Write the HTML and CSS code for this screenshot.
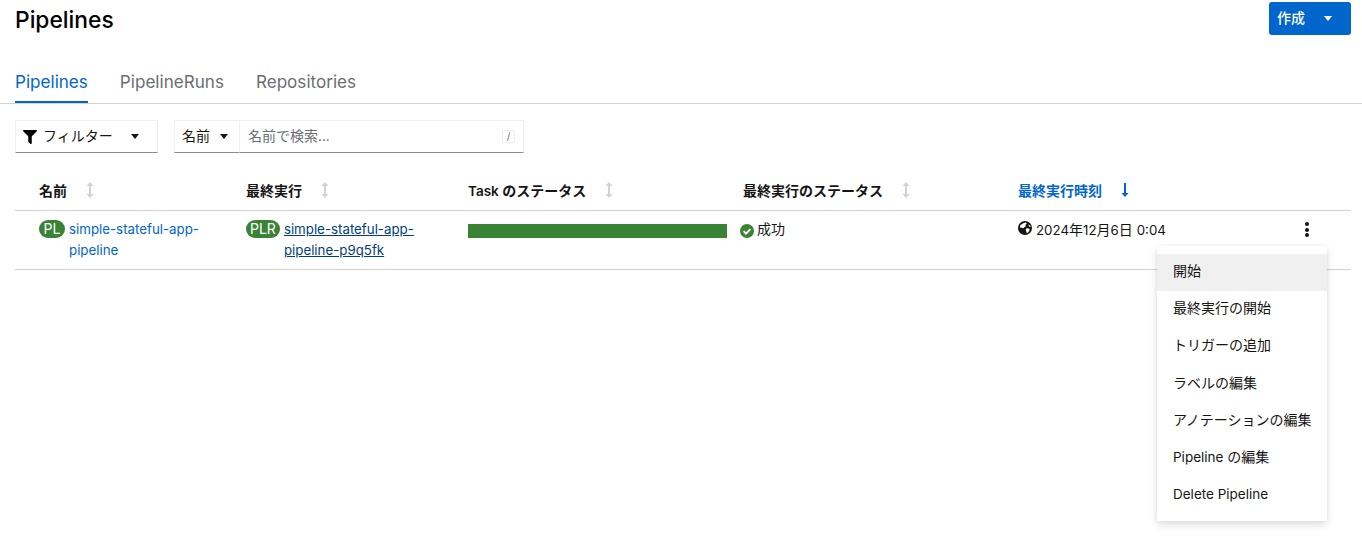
FILE: index.html
```html
<!DOCTYPE html>
<html lang="ja">
<head>
  <meta charset="UTF-8">
  <title>Pipelines</title>
  <link rel="stylesheet" href="styles.css">
</head>
<body>
  <div class="page-header">
    <h1>Pipelines</h1>
    <button class="create-btn"><span class="btn-text">作成</span> <span class="caret caret-white"></span></button>
  </div>

  <div class="tabs">
    <a class="tab active">Pipelines</a>
    <a class="tab">PipelineRuns</a>
    <a class="tab">Repositories</a>
  </div>

  <div class="toolbar">
    <button class="filter-btn">
      <svg class="filter-icon" viewBox="0 0 512 512"><path d="M487 0H25C3 0-9 27 7 43l185 185v204c0 8 4 15 10 20l80 56c16 11 38 0 38-20V228L505 43c16-16 4-43-18-43z"/></svg>
      <span class="btn-text">フィルター</span>
      <span class="caret"></span>
    </button>
    <div class="search-group">
      <button class="name-btn"><span class="btn-text">名前</span> <span class="caret"></span></button>
      <div class="search-box">
        <span class="placeholder btn-text">名前で検索<span class="lat">...</span></span>
        <span class="slash">/</span>
      </div>
    </div>
  </div>

  <div class="table">
    <div class="row head">
      <div class="cell">名前 <svg class="sort-icon" viewBox="0 0 8 16"><path d="M4 0L7.500 4H5v8h2.500L4 16 .5 12H3V4H.5z"/></svg></div>
      <div class="cell">最終実行 <svg class="sort-icon" viewBox="0 0 8 16"><path d="M4 0L7.500 4H5v8h2.500L4 16 .5 12H3V4H.5z"/></svg></div>
      <div class="cell"><span><span class="lat">Task</span> のステータス</span> <svg class="sort-icon" viewBox="0 0 8 16"><path d="M4 0L7.500 4H5v8h2.500L4 16 .5 12H3V4H.5z"/></svg></div>
      <div class="cell">最終実行のステータス <svg class="sort-icon" viewBox="0 0 8 16"><path d="M4 0L7.500 4H5v8h2.500L4 16 .5 12H3V4H.5z"/></svg></div>
      <div class="cell sorted">最終実行時刻 <svg class="sort-icon" viewBox="0 0 8 16"><path d="M3 1h2v10h2.500L4 15 .5 11H3z"/></svg></div>
    </div>
    <div class="row body">
      <div class="cell resource">
        <span class="badge">PL</span>
        <a class="link">simple-stateful-app-pipeline</a>
      </div>
      <div class="cell resource">
        <span class="badge">PLR</span>
        <a class="link visited">simple-stateful-app-pipeline-p9q5fk</a>
      </div>
      <div class="cell"><div class="task-bar"></div></div>
      <div class="cell status">
        <svg class="check-icon" viewBox="0 0 14 14"><circle cx="7" cy="7" r="7"/><path d="M3.600 7.200l2.400 2.400 4.400-4.500" fill="none" stroke="#fff" stroke-width="1.900"/></svg>
        <span class="status-text">成功</span>
      </div>
      <div class="cell time">
        <svg class="globe-icon" viewBox="0 0 14 14">
          <circle cx="7" cy="7" r="7" fill="#151515"/>
          <path fill="#fff" d="M5.200 2.200L8 1.600l.8 1.200-1.500 1.200.6 1.300-1.600.9-1 1.100-1.700-.6-1.700-.3.400-2.200zM8.500 7.300l2.300.2 1 1.300-1.400 2.500-1.500.9-.7-1.900-.6-1.600zM10.600 3.200l1.600 1.500.4 1.400-1.700-.5z"/>
        </svg>
        <span><span class="date">2024</span>年<span class="date">12</span>月<span class="date">6</span>日 <span class="date">0:04</span></span>
      </div>
      <div class="kebab"><i></i><i></i><i></i></div>
    </div>
  </div>

  <ul class="menu">
    <li class="hover">開始</li>
    <li>最終実行の開始</li>
    <li>トリガーの追加</li>
    <li>ラベルの編集</li>
    <li>アノテーションの編集</li>
    <li><span class="lat">Pipeline</span> の編集</li>
    <li class="lat latin-item">Delete Pipeline</li>
  </ul>
</body>
</html>
```
FILE: styles.css
```css
:root {
  --blue: #06c;
  --green: #3a8235;
  --dark: #151515;
  --grey: #6a6e73;
  --line: #d2d2d2;
}

* {
  box-sizing: border-box;
  margin: 0;
  padding: 0;
}

html, body {
  height: 541px;
  overflow: hidden;
}

body {
  font-family: Inter, "Noto Sans CJK JP", sans-serif;
  font-size: 14px;
  color: var(--dark);
  background: #fff;
  position: relative;
}

button {
  font: inherit;
  color: inherit;
  background: #fff;
  border: none;
}

.lat {
  font-size: 13.500px;
}

.date {
  font-size: 13.300px;
}

.btn-text {
  padding-bottom: 4px;
}

.page-header {
  display: flex;
  justify-content: space-between;
  padding: 2px 11px 0 15px;
  height: 62px;
}

h1 {
  font-size: 22.800px;
  font-weight: 500;
  line-height: 36px;
  color: #000;
}

.create-btn {
  width: 82px;
  height: 33px;
  background: var(--blue);
  color: #fff;
  border-radius: 3px;
  font-weight: 500;
  display: flex;
  align-items: center;
  justify-content: space-between;
  padding: 0 19px 0 8px;
}

.caret {
  display: inline-block;
  border-left: 4.500px solid transparent;
  border-right: 4.500px solid transparent;
  border-top: 5px solid var(--dark);
}

.caret-white {
  border-top-color: #fff;
}

.tabs {
  display: flex;
  gap: 32px;
  padding-left: 15px;
  height: 42px;
  border-bottom: 1px solid var(--line);
}

.tab {
  font-size: 17.100px;
  line-height: 40px;
  height: 41px;
  color: var(--grey);
}

.tab.active {
  color: var(--blue);
  border-bottom: 2px solid var(--blue);
}

.toolbar {
  display: flex;
  gap: 16px;
  padding: 16px 0 0 15px;
  height: 66px;
}

.filter-btn, .name-btn, .search-box {
  height: 33px;
  border: 1px solid #f0f0f0;
  border-bottom: 1px solid #8a8d90;
  display: flex;
  align-items: center;
}

.filter-btn {
  width: 143px;
  padding: 0 0 0 7px;
}

.filter-icon {
  width: 14px;
  height: 14px;
  margin-right: 6px;
}

.filter-btn .caret {
  margin-left: 18px;
}

.search-group {
  display: flex;
}

.name-btn {
  width: 65px;
  padding-left: 7px;
  gap: 10px;
  border-right: none;
}

.search-box {
  width: 285px;
  padding: 0 8px 0 8px;
  justify-content: space-between;
  border-left: 1px solid #f0f0f0;
}

.placeholder {
  color: var(--grey);
}

.slash {
  width: 13px;
  height: 13px;
  border: 1px solid #eee;
  border-radius: 2px;
  font-size: 10px;
  line-height: 11px;
  text-align: center;
  color: var(--grey);
}

.table {
  margin: 0 11px 0 15px;
}

.row {
  display: grid;
  grid-template-columns: 207px 222px 275px 275px 1fr;
  padding-left: 24px;
  border-bottom: 1px solid var(--line);
  position: relative;
}

.row.head {
  height: 41px;
  align-items: center;
  font-weight: 600;
}

.head .cell {
  display: flex;
  align-items: center;
}

.sort-icon {
  width: 8px;
  height: 16px;
  margin-left: 19px;
  fill: #d2d2d2;
}

.sorted {
  color: var(--blue);
}

.sorted .sort-icon {
  fill: var(--blue);
}

.row.body {
  height: 59px;
  padding-top: 8px;
  line-height: 21px;
}

.resource {
  display: flex;
  align-items: flex-start;
  gap: 4px;
  padding-right: 24px;
}

.badge {
  flex: none;
  height: 18px;
  margin-top: 1px;
  padding: 0 4px;
  min-width: 26px;
  border-radius: 9px;
  background: var(--green);
  color: #fff;
  line-height: 18px;
  text-align: center;
}

.link {
  color: var(--blue);
  font-size: 13.300px;
}

.visited {
  color: #004080;
  text-decoration: underline;
}

.task-bar {
  width: 259px;
  height: 14px;
  margin-top: 5px;
  background: var(--green);
}

.status {
  display: flex;
  align-items: flex-start;
  gap: 3px;
  margin-left: -3px;
}

.status-text {
  line-height: 19px;
}

.check-icon {
  width: 14px;
  height: 14px;
  margin-top: 5px;
  fill: var(--green);
}

.time {
  display: flex;
  align-items: flex-start;
  gap: 4px;
}

.globe-icon {
  width: 14px;
  height: 14px;
  margin-top: 2px;
}

.kebab {
  position: absolute;
  top: 11px;
  left: 1290px;
  display: flex;
  flex-direction: column;
  gap: 1.500px;
}

.kebab i {
  width: 4px;
  height: 4px;
  border-radius: 50%;
  background: var(--dark);
}

.menu {
  position: absolute;
  left: 1157px;
  top: 246px;
  width: 170px;
  height: 275px;
  padding: 8px 0;
  list-style: none;
  background: #fff;
  box-shadow: 0 4px 8px rgba(3, 3, 3, 0.12), 0 0 4px rgba(3, 3, 3, 0.06);
  z-index: 5;
}

.menu li {
  height: 37.200px;
  line-height: 34px;
  padding-left: 16px;
}

.menu li.latin-item {
  line-height: 35px;
}

.menu li.hover {
  background: #f0f0f0;
}
```
